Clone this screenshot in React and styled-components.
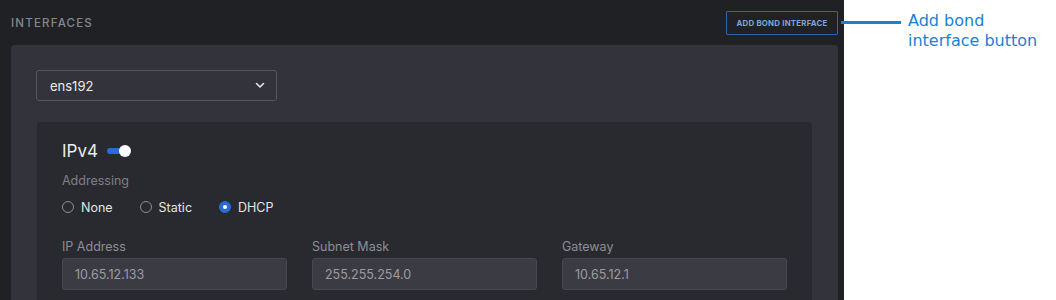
import React from "react";
import styled, { createGlobalStyle } from "styled-components";

const Global = createGlobalStyle`
  html, body { margin: 0; padding: 0; background: #ffffff; }
  body { font-family: Inter, "Noto Sans", sans-serif; }
`;

const Page = styled.div`
  display: flex;
  width: 1056px;
  height: 300px;
  overflow: hidden;
`;

const Dark = styled.div`
  width: 844px;
  flex: none;
  background: #202124;
  padding: 11px 6px 0 11px;
  box-sizing: border-box;
  display: flex;
  flex-direction: column;
`;

const Header = styled.div`
  display: flex;
  align-items: center;
  justify-content: space-between;
  height: 24px;
  margin-bottom: 10px;
`;

const Title = styled.div`
  color: #86878d;
  font-size: 11.5px;
  font-weight: 500;
  letter-spacing: 1.2px;
`;

const BondButton = styled.button`
  width: 112px;
  height: 24px;
  box-sizing: border-box;
  background: transparent;
  border: 1px solid #2f62b0;
  border-radius: 1px;
  color: #7fa3dc;
  font-family: Inter, "Noto Sans", sans-serif;
  font-size: 7.8px;
  font-weight: 700;
  letter-spacing: 0.25px;
  padding: 0;
`;

const Panel = styled.div`
  flex: 1;
  background: #33343b;
  border-radius: 4px 4px 0 0;
  padding: 25px 26px 0 25px;
  display: flex;
  flex-direction: column;
`;

const Select = styled.div`
  width: 241px;
  height: 31px;
  box-sizing: border-box;
  border: 1px solid #55565e;
  border-radius: 3px;
  display: flex;
  align-items: center;
  justify-content: space-between;
  padding: 0 11px 0 13px;
  color: #ececee;
  font-size: 13px;
  margin-bottom: 21px;
`;

const Card = styled.div`
  flex: 1;
  margin-left: 1px;
  background: #292a2f;
  border-radius: 3px 3px 0 0;
  padding: 18px 25px 0 25px;
`;

const TitleRow = styled.div`
  display: flex;
  align-items: center;
  gap: 9px;
  height: 22px;
`;

const IpTitle = styled.div`
  color: #ececee;
  font-size: 17px;
`;

const Toggle = styled.div`
  position: relative;
  width: 24px;
  height: 12px;
`;

const Track = styled.div`
  position: absolute;
  left: 0;
  top: 3px;
  width: 20px;
  height: 6px;
  border-radius: 3px;
  background: #2a6bd8;
`;

const Thumb = styled.div`
  position: absolute;
  right: 0;
  top: 0;
  width: 12px;
  height: 12px;
  border-radius: 50%;
  background: #ffffff;
`;

const SubLabel = styled.div`
  color: #7e7f86;
  font-size: 12.5px;
  margin-top: 11px;
`;

const RadioRow = styled.div`
  display: flex;
  align-items: center;
  margin-top: 11px;
  height: 16px;
`;

const RadioItem = styled.label`
  display: flex;
  align-items: center;
  gap: 7px;
  color: #e4e4e7;
  font-size: 12.5px;
  margin-right: ${p => p.$gap}px;
`;

const Circle = styled.span`
  width: 12px;
  height: 12px;
  box-sizing: border-box;
  border-radius: 50%;
  border: 1px solid ${p => (p.$on ? "#2a6bd8" : "#8c8d93")};
  background: ${p => (p.$on ? "#2a6bd8" : "transparent")};
  display: flex;
  align-items: center;
  justify-content: center;
  &::after {
    content: "";
    width: 4px;
    height: 4px;
    border-radius: 50%;
    background: ${p => (p.$on ? "#ffffff" : "transparent")};
  }
`;

const Fields = styled.div`
  display: grid;
  grid-template-columns: 225px 225px 225px;
  column-gap: 25px;
  margin-top: 24px;
`;

const Field = styled.div`
  display: flex;
  flex-direction: column;
  gap: 4px;
`;

const FieldLabel = styled.div`
  color: #8d8e94;
  font-size: 12.5px;
`;

const Input = styled.div`
  height: 32px;
  box-sizing: border-box;
  background: #3a3b43;
  border: 1px solid #46474f;
  border-radius: 3px;
  display: flex;
  align-items: center;
  padding-left: 12px;
  color: #9c9da3;
  font-size: 12.5px;
`;

const Side = styled.div`
  flex: 1;
  display: flex;
  align-items: flex-start;
  padding-top: 11px;
`;

const Line = styled.div`
  width: 60px;
  height: 3px;
  background: #1b7fd4;
  margin-top: 10px;
  margin-left: -3px;
  margin-right: 7px;
`;

const Note = styled.div`
  font-family: "DejaVu Sans", Verdana, sans-serif;
  color: #1b7fd4;
  font-size: 16px;
  line-height: 20px;
`;

const Chevron = () => (
  <svg width="10" height="7" viewBox="0 0 10 7" fill="none">
    <path d="M1.5 1.5 L5 5 L8.5 1.5" stroke="#e6e6e8" strokeWidth="1.6" strokeLinecap="round" strokeLinejoin="round" />
  </svg>
);

const fields = [
  { label: "IP Address", value: "10.65.12.133" },
  { label: "Subnet Mask", value: "255.255.254.0" },
  { label: "Gateway", value: "10.65.12.1" },
];

export default function App() {
  return (
    <>
      <Global />
      <Page>
        <Dark>
          <Header>
            <Title>INTERFACES</Title>
            <BondButton>ADD BOND INTERFACE</BondButton>
          </Header>
          <Panel>
            <Select>
              <span>ens192</span>
              <Chevron />
            </Select>
            <Card>
              <TitleRow>
                <IpTitle>IPv4</IpTitle>
                <Toggle>
                  <Track />
                  <Thumb />
                </Toggle>
              </TitleRow>
              <SubLabel>Addressing</SubLabel>
              <RadioRow>
                <RadioItem $gap={27}><Circle />None</RadioItem>
                <RadioItem $gap={27}><Circle />Static</RadioItem>
                <RadioItem $gap={0}><Circle $on />DHCP</RadioItem>
              </RadioRow>
              <Fields>
                {fields.map(f => (
                  <Field key={f.label}>
                    <FieldLabel>{f.label}</FieldLabel>
                    <Input>{f.value}</Input>
                  </Field>
                ))}
              </Fields>
            </Card>
          </Panel>
        </Dark>
        <Side>
          <Line />
          <Note>Add bond<br />interface button</Note>
        </Side>
      </Page>
    </>
  );
}
